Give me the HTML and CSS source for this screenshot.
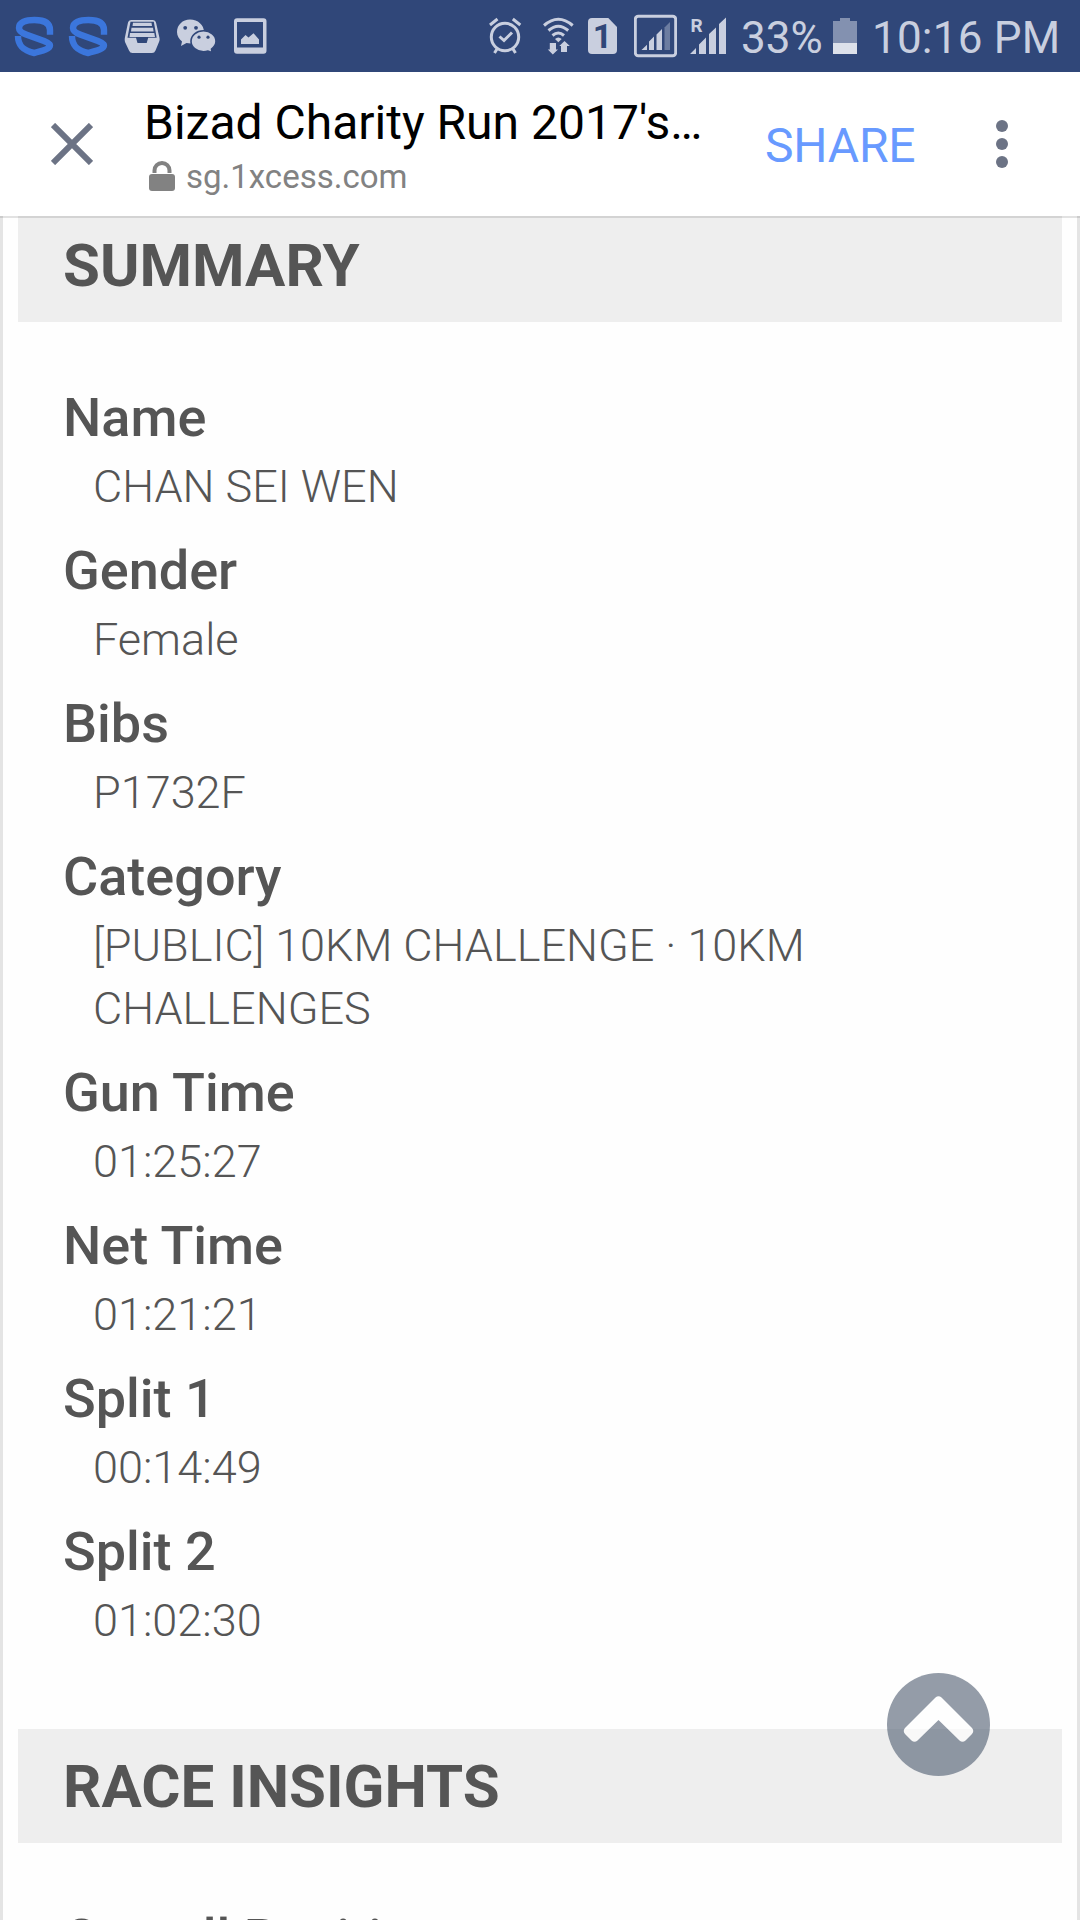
FILE: index.html
```html
<!DOCTYPE html>
<html lang="en">
<head>
    <meta charset="UTF-8">
    <meta name="viewport" content="width=device-width, initial-scale=1.0">
    <title>Bizad Charity Run 2017's Results</title>
    <link rel="stylesheet" href="styles.css">
</head>
<body>
    <div class="status-bar">
        <div class="notifications">
            <svg class="icon-s" width="40" height="72" viewBox="14 0 40 72"><path d="M50 34.800V30C50 22.500 43 20 34.500 20C25 20 19 22.500 19 28C19 31.500 22 33 26 34.500L44 41C50 43.500 51 45 49 47.500C46 50.500 40 51 34.300 53C25 51 18 47 18 36" /></svg>
            <svg class="icon-s" width="40" height="72" viewBox="14 0 40 72"><path d="M50 34.800V30C50 22.500 43 20 34.500 20C25 20 19 22.500 19 28C19 31.500 22 33 26 34.500L44 41C50 43.500 51 45 49 47.500C46 50.500 40 51 34.300 53C25 51 18 47 18 36" /></svg>
            <svg width="36" height="72" viewBox="124 0 36 72">
                <path class="fill" d="M131 20H153Q155.500 20 156 22.500L159.500 38Q160 40 159 42L155.500 50.500Q154.500 53 152 53H132.500Q130 53 129 50.500L125 42Q124.500 40 124.800 38L128 22.500Q128.500 20 131 20Z" />
                <path class="cut" d="M130.500 21.700H153.800L156.700 37.800H148.200L146.700 43H137.500L136 37.800H127.500Z" />
                <path class="fill" d="M133 22.700H151.500L152 26H132.500ZM131.500 27.700H153L153.600 31.500H131ZM130 33H154.300L155 37H129.500Z" />
            </svg>
            <svg class="icon-chat" width="40" height="72" viewBox="176 0 40 72">
                <path class="fill" d="M190 19.500C182.500 19.500 177 25 177 32C177 36 179 39 182 41.500L181 46L186.500 43C197 45 204 39 204 32C204 25 198 19.500 190 19.500Z" />
                <path class="chat-front" d="M203.500 30.700C196.500 30.700 191 35.500 191 41.200C191 47 196.500 51.700 203.500 51.700C205 51.700 206.500 51.500 208 51L212 52.500L211.500 49C214 47 216 44.500 216 41.200C216 35.500 210.500 30.700 203.500 30.700Z" />
                <circle class="cut" cx="185.200" cy="27.800" r="1.900" /><circle class="cut" cx="196" cy="27.800" r="1.900" />
                <circle class="cut" cx="199" cy="37.200" r="1.600" /><circle class="cut" cx="208" cy="37.200" r="1.600" />
            </svg>
            <svg class="icon-image" width="33" height="72" viewBox="234 0 33 72">
                <path class="fill" fill-rule="evenodd" d="M237 18.300H263.500Q266.500 18.300 266.500 21.300V50.700Q266.500 53.700 263.500 53.700H237Q234 53.700 234 50.700V21.300Q234 18.300 237 18.300ZM237 22V47.500H263V22Z" />
                <path class="fill" d="M241 44V39.500L245.500 35L248.500 37.500L253.500 33.300L259 39.500V44Z" />
            </svg>
        </div>
        <div class="indicators">
            <svg width="34" height="72" viewBox="488 0 34 72">
                <g class="line">
                    <circle cx="505" cy="37" r="13.700" /><path d="M499.500 36.500L504 40.500L512 32.500" />
                    <path d="M490 25L497.500 19M520.300 25L512.800 19M497 49L494.500 53M513 49L515.500 53" />
                </g>
            </svg>
            <svg class="icon-wifi" width="32" height="72" viewBox="542 0 32 72">
                <path class="line" d="M544 25.500Q558.300 13 572.700 25.500M548.500 30.500Q558.300 22 568.200 30.500M552.500 35.500Q558.300 30.500 564 35.500" />
                <path class="fill" d="M555 39Q558.300 36 561.700 39L558.300 42.200ZM549.800 43H556V49.500H558L552.800 54.500L547.800 49.500H549.800ZM561 52V46H559.300L564.500 41L569.800 46H567V52Z" />
            </svg>
            <div class="sim"><span>1</span></div>
            <svg class="icon-signal" width="43" height="72" viewBox="634 0 43 72">
                <rect class="line" x="635.300" y="16.300" width="40.400" height="39.400" rx="3" />
                <path class="fill" d="M641.500 50L647 44.800V50ZM649 50V41.500L654 36.500V50ZM656.500 50V34.500L662 29V50Z" />
                <path class="fill dim" d="M664.500 50V27.500L670 22V50Z" />
            </svg>
            <svg class="icon-roaming" width="37" height="72" viewBox="689 0 37 72">
                <text class="fill roaming" x="690.500" y="32">R</text>
                <path class="fill" d="M690 54L696 48V54ZM699 54V44.500L706 37.500V54ZM709 54V34L716 27.500V54ZM719 54V24L726 17.500V54Z" />
            </svg>
            <span class="percent">33%</span>
            <svg class="icon-battery" width="24" height="72" viewBox="833 0 24 72">
                <path class="battery-empty" d="M833 21H840V18H850V21H857V43H833Z" />
                <path class="battery-full" d="M833 43H857V54H833Z" />
            </svg>
            <span class="clock">10:16 PM</span>
        </div>
    </div>

    <div class="app-bar">
        <svg class="close" width="42" height="42" viewBox="0 0 42 42"><path d="M2 2L40 40M40 2L2 40" /></svg>
        <div class="page-info">
            <div class="page-title">Bizad Charity Run 2017's…</div>
            <div class="page-url">
                <svg width="26" height="30" viewBox="0 0 26 30">
                    <rect y="13" width="26" height="17" rx="3" />
                    <path d="M5.500 12V9.500A7.500 7.500 0 0 1 20.500 9.500V12" />
                </svg>
                <span>sg.1xcess.com</span>
            </div>
        </div>
        <div class="share">SHARE</div>
        <div class="menu"><i></i><i></i><i></i></div>
    </div>

    <div class="content">
        <h2>SUMMARY</h2>
        <dl>
            <dt>Name</dt>
            <dd>CHAN SEI WEN</dd>
            <dt>Gender</dt>
            <dd>Female</dd>
            <dt>Bibs</dt>
            <dd>P1732F</dd>
            <dt>Category</dt>
            <dd>[PUBLIC] 10KM CHALLENGE · 10KM CHALLENGES</dd>
            <dt>Gun Time</dt>
            <dd>01:25:27</dd>
            <dt>Net Time</dt>
            <dd>01:21:21</dd>
            <dt>Split 1</dt>
            <dd>00:14:49</dd>
            <dt>Split 2</dt>
            <dd>01:02:30</dd>
        </dl>
        <h2>RACE INSIGHTS</h2>
        <dl>
            <dt>Overall Position</dt>
        </dl>
    </div>

    <div class="to-top">
        <svg width="103" height="103" viewBox="0 0 103 103"><path d="M48.500 24.500Q51.500 22 54.500 24.500L85 55Q87.500 58 85 61L78.500 67.500Q75.500 70 72.500 67.500L51.500 47L30.500 67.500Q27.500 70 24.500 67.500L18 61Q15.500 58 18 55Z" /></svg>
    </div>
</body>
</html>
```
FILE: styles.css
```css
* {
    box-sizing: border-box;
}
body {
    font-family: Roboto, sans-serif;
    background-color: #fefefe;
    color: #555;
    margin: 0;
    height: 1920px;
    overflow: hidden;
    display: flex;
    flex-direction: column;
}
svg {
    display: block;
    flex: none;
}

/* status bar */
.status-bar {
    height: 72px;
    flex: none;
    background-color: #304779;
    color: #c9cfdf;
    display: flex;
    justify-content: space-between;
    padding: 0 20px 0 14px;
}
.notifications,
.indicators {
    display: flex;
    align-items: center;
}
.fill {
    fill: #c9cfdf;
}
.cut {
    fill: #304779;
}
.dim {
    opacity: 0.4;
}
.line {
    fill: none;
    stroke: #c9cfdf;
    stroke-width: 3;
}
.icon-s {
    fill: none;
    stroke: #3b76dc;
    stroke-width: 6.4;
    margin-right: 14px;
}
.icon-s + svg:not(.icon-s) {
    margin-left: 2px;
}
.icon-chat {
    margin-left: 16px;
}
.chat-front {
    fill: #c9cfdf;
    stroke: #304779;
    stroke-width: 1.6;
}
.icon-image {
    margin-left: 18px;
}
.icon-wifi {
    margin-left: 20px;
}
.sim {
    width: 29px;
    height: 36px;
    margin-left: 14px;
    border-radius: 4px;
    background-color: #c9cfdf;
    color: #304779;
    clip-path: polygon(0 0, 70% 0, 100% 25%, 100% 100%, 0 100%);
    font-size: 34px;
    font-weight: 700;
    line-height: 37px;
    text-align: center;
}
.icon-signal {
    margin-left: 17px;
}
.icon-roaming {
    margin-left: 12px;
}
.roaming {
    font-size: 19px;
    font-weight: 700;
}
.percent,
.clock {
    padding-top: 3px;
    font-size: 44px;
    line-height: 72px;
    white-space: nowrap;
}
.percent {
    width: 82px;
    margin-left: 15px;
}
.icon-battery {
    margin-left: 10px;
}
.battery-empty {
    fill: #8391b0;
}
.battery-full {
    fill: #dde1ea;
}
.clock {
    width: 188px;
    margin-left: 15px;
    letter-spacing: 0.2px;
}

/* browser bar */
.app-bar {
    position: relative;
    z-index: 1;
    height: 144px;
    flex: none;
    background-color: #fff;
    box-shadow: 0 2px 0 rgba(0, 0, 0, 0.11);
    display: flex;
    align-items: center;
    padding: 0 72px 0 51px;
}
.close {
    fill: none;
    stroke: #6c7385;
    stroke-width: 6;
}
.page-info {
    width: 572px;
    margin-left: 51px;
    padding-top: 10px;
}
.page-title {
    color: #000;
    font-size: 48px;
    line-height: 56px;
    white-space: nowrap;
}
.page-url {
    display: flex;
    align-items: center;
    gap: 11px;
    padding-left: 5px;
    color: #828282;
    font-size: 33px;
    line-height: 52px;
}
.page-url svg {
    fill: #828282;
    margin-bottom: 3px;
}
.page-url path {
    fill: none;
    stroke: #828282;
    stroke-width: 4;
}
.share {
    margin-left: 49px;
    padding-top: 2px;
    color: #689aff;
    font-size: 48px;
    letter-spacing: -0.2px;
}
.menu {
    margin-left: auto;
    display: flex;
    flex-direction: column;
    gap: 6px;
}
.menu i {
    width: 12px;
    height: 12px;
    border-radius: 50%;
    background-color: #6c7385;
}

/* results */
.content {
    flex: 1;
    min-height: 0;
    overflow: hidden;
    border: solid #e4e4e4;
    border-width: 0 3px;
    padding: 0 15px;
}
h2 {
    margin: 0;
    padding: 16px 45px 14px;
    background-color: #eee;
    font-size: 60px;
    font-weight: 700;
    line-height: 84px;
}
/* first heading is scrolled partly under the bar */
h2:first-child {
    margin-top: -8px;
}
dl {
    margin: 0;
    padding: 58px 45px 62px;
}
dt {
    font-size: 54px;
    font-weight: 500;
    line-height: 75px;
}
dd {
    margin: 0 0 15px 30px;
    font-size: 45px;
    font-weight: 300;
    line-height: 63px;
}
dd:last-child {
    margin-bottom: 0;
    padding-bottom: 15px;
}
.to-top {
    position: absolute;
    left: 887px;
    top: 1672.5px;
    width: 103px;
    height: 103px;
    border-radius: 50%;
    background-color: #4e5c70;
    opacity: 0.6;
}
.to-top path {
    fill: #fff;
}
```
